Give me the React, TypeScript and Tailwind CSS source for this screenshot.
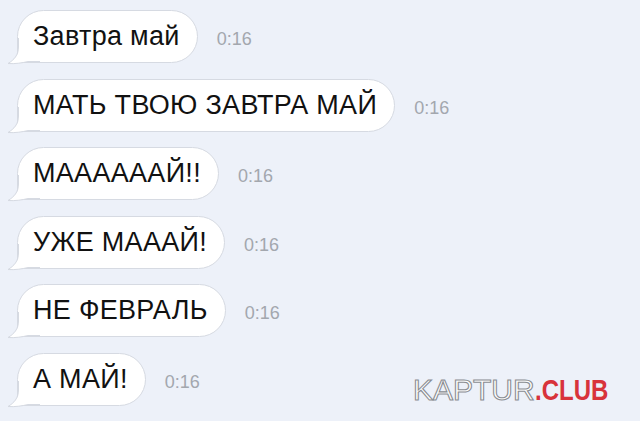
import React from "react";

type Msg = { text: string; time: string };

const messages: Msg[] = [
  { text: "Завтра май", time: "0:16" },
  { text: "МАТЬ ТВОЮ ЗАВТРА МАЙ", time: "0:16" },
  { text: "МААААААЙ!!", time: "0:16" },
  { text: "УЖЕ МАААЙ!", time: "0:16" },
  { text: "НЕ ФЕВРАЛЬ", time: "0:16" },
  { text: "А МАЙ!", time: "0:16" },
];

const Tail = () => (
  <svg
    className="absolute left-[-12px] bottom-[-3px]"
    width="34"
    height="27"
    viewBox="0 0 34 27"
  >
    <path
      d="M13,0 L13,9 C13,17 8,22 2,25.5 C9,26 16,25 22,23.5 L34,23.5 L34,0 Z"
      fill="#ffffff"
    />
    <path
      d="M12.5,0 L12.5,9 C12.5,17 8,22 2,25.5 C9,26 16,25 22,23.5 L34,23.5"
      fill="none"
      stroke="#d6dae2"
      strokeWidth="1"
    />
  </svg>
);

const Bubble = ({ text, time }: Msg) => (
  <div className="flex items-baseline gap-[19px]">
    <div className="relative flex h-[53px] items-center rounded-[27px] rounded-bl-none border border-[#d6dae2] bg-white pl-[15px] pr-[17px] text-[27px] tracking-[0.3px] text-[#111] [font-family:'Liberation_Sans',Arial,sans-serif]">
      <Tail />
      <span className="relative">{text}</span>
    </div>
    <span className="text-[18px] text-[#a3a7ae] [font-family:'Liberation_Sans',Arial,sans-serif]">
      {time}
    </span>
  </div>
);

export default function App() {
  return (
    <div className="relative h-[421px] w-[640px] overflow-hidden bg-[#edf1f9]">
      <div className="flex flex-col items-start gap-[15.5px] pl-[17px] pt-[10px]">
        {messages.map((m, i) => (
          <Bubble key={i} {...m} />
        ))}
      </div>
      <div className="absolute left-[413px] top-[375px] flex items-baseline text-[30px] leading-none [font-family:'Liberation_Sans',Arial,sans-serif]">
        <span className="font-normal text-white [-webkit-text-stroke:1.1px_#8a8d92]">KAPTUR</span>
        <span className="inline-block origin-left scale-x-[0.8] font-bold text-[#d8333b]">.CLUB</span>
      </div>
    </div>
  );
}
